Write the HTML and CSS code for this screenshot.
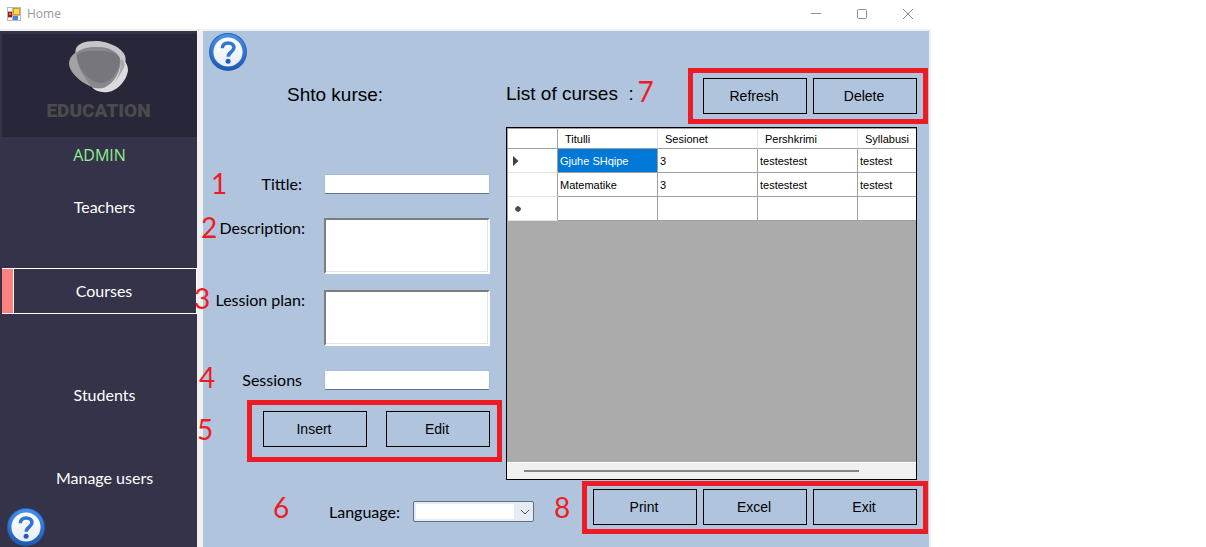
FILE: index.html
```html
<!DOCTYPE html>
<html lang="en">
<head>
<meta charset="utf-8">
<title>Home</title>
<link rel="stylesheet" href="styles.css">
</head>
<body>
<svg class="defs" aria-hidden="true">
  <defs>
    <linearGradient id="ring" x1="0" y1="0" x2="0" y2="1">
      <stop offset="0" stop-color="#4790ee"/><stop offset="1" stop-color="#1d5bb2"/>
    </linearGradient>
    <linearGradient id="disc" x1="0" y1="0" x2="0" y2="1">
      <stop offset="0" stop-color="#ffffff"/><stop offset="1" stop-color="#e6edf7"/>
    </linearGradient>
    <symbol id="help" viewBox="0 0 38 38">
      <circle cx="19" cy="19" r="19" fill="#2560b5"/>
      <circle cx="19" cy="19" r="18" fill="url(#ring)"/>
      <circle cx="19" cy="19" r="14.6" fill="url(#disc)"/>
      <path d="M13.3 15.2C13.3 11.8 15.7 9.9 19 9.9C22.5 9.9 25 11.7 25 14.6C25 18.7 19.2 19 19.2 23.8" fill="none" stroke="#3174d3" stroke-width="3.5"/>
      <circle cx="19.1" cy="28.2" r="2.5" fill="#1f5eb8"/>
    </symbol>
  </defs>
</svg>
<div class="window">
  <header class="titlebar">
    <svg class="app-icon" viewBox="0 0 14 14" aria-hidden="true">
      <rect width="14" height="14" fill="#b9b9b9"/>
      <rect x="1" y="1" width="4" height="3" fill="#fff"/>
      <rect x="1" y="11" width="4" height="2" fill="#fff"/>
      <rect x="6" y="9" width="7" height="4" fill="#fff"/>
      <rect x="1" y="5" width="4" height="5" fill="#a51212"/>
      <rect x="2" y="6" width="2" height="2" fill="#e8685c"/>
      <rect x="6" y="1" width="7" height="7" fill="#d79a12"/>
      <rect x="7" y="2" width="5" height="5" fill="#ffd84f"/>
      <rect x="6" y="9" width="5" height="4" fill="#4a86e0"/>
    </svg>
    <span class="caption">Home</span>
    <div class="window-buttons">
      <button type="button" aria-label="Minimize"><svg viewBox="0 0 12 12"><path d="M1 5.5H11"/></svg></button>
      <button type="button" aria-label="Maximize"><svg viewBox="0 0 12 12"><rect x="1.5" y="1.5" width="9" height="9" rx="1"/></svg></button>
      <button type="button" aria-label="Close"><svg viewBox="0 0 12 12"><path d="M1 1L11 11M11 1L1 11"/></svg></button>
    </div>
  </header>

  <div class="body">
    <aside class="sidebar">
      <div class="logo">
        <svg class="logo-mark" viewBox="204 120 182 158" aria-hidden="true">
          <path d="M283 263C262 240 226 190 226 155C226 132 252 123 286 123C322 123 376 145 376 178C376 212 335 262 300 266Z" fill="#c6c6c8"/>
          <path d="M359 178C376 180 383 195 383 210C380 240 350 277 312 276C295 276 283 270 276 262Z" fill="#dcdcde"/>
          <path d="M366 178C372 184 372 190 373 196C366 215 350 240 330 262C350 240 366 210 359 178Z" fill="#a8a8aa"/>
          <path d="M207 190C207 166 232 150 262 143C300 137 360 153 360 186C360 222 330 263 298 264C262 264 207 222 207 190Z" fill="#a2a2a5"/>
          <path d="M228 159C245 143 275 140 300 141C335 144 360 160 360 186C360 222 330 263 298 264C288 264 281 263 275 260C250 232 229 195 228 159Z" fill="#89898d"/>
          <path d="M231 165C245 150 280 151 310 153C335 155 352 161 358 173C362 200 338 248 304 248C266 248 232 205 231 165Z" fill="#77767d"/>
        </svg>
        <span class="logo-text">EDUCATION</span>
      </div>
      <p class="role">ADMIN</p>
      <nav class="nav">
        <div class="nav-group">
          <button type="button" class="nav-item">Teachers</button>
          <button type="button" class="nav-item active">Courses</button>
        </div>
        <div class="nav-group">
          <button type="button" class="nav-item">Students</button>
          <button type="button" class="nav-item">Manage users</button>
        </div>
      </nav>
      <button type="button" class="help" aria-label="Help"><svg><use href="#help"/></svg></button>
    </aside>

    <main class="main">
      <div class="columns">
        <form class="form">
          <button type="button" class="help" aria-label="Help"><svg><use href="#help"/></svg></button>
          <h1 class="heading form-heading">Shto kurse:</h1>
          <div class="field short"><label for="tittle">Tittle:</label><input id="tittle" type="text"><span class="mark mark-1">1</span></div>
          <div class="field"><label for="description">Description:</label><textarea id="description"></textarea><span class="mark mark-2">2</span></div>
          <div class="field last-area"><label for="plan">Lession plan:</label><textarea id="plan"></textarea><span class="mark mark-3">3</span></div>
          <div class="field short"><label for="sessions">Sessions</label><input id="sessions" type="text"><span class="mark mark-4">4</span></div>
          <div class="actions form-actions">
            <button type="button" class="btn">Insert</button>
            <button type="button" class="btn">Edit</button>
            <span class="mark mark-5">5</span>
          </div>
        </form>

        <section class="list">
          <div class="list-head">
            <h2 class="heading list-heading">List of curses&nbsp; :<span class="mark mark-7">7</span></h2>
            <div class="actions list-actions">
              <button type="button" class="btn">Refresh</button>
              <button type="button" class="btn">Delete</button>
            </div>
          </div>
          <div class="grid-view">
            <table>
              <colgroup><col class="col-head"><col class="col"><col class="col"><col class="col"><col></colgroup>
              <thead>
                <tr><th></th><th scope="col">Titulli</th><th scope="col">Sesionet</th><th scope="col">Pershkrimi</th><th scope="col">Syllabusi</th></tr>
              </thead>
              <tbody>
                <tr><th class="row-head"><svg viewBox="0 0 6 10"><path d="M0 0L5.5 5L0 10Z"/></svg></th><td class="selected">Gjuhe SHqipe</td><td>3</td><td>testestest</td><td>testest</td></tr>
                <tr><th class="row-head"></th><td>Matematike</td><td>3</td><td>testestest</td><td>testest</td></tr>
                <tr><th class="row-head new"><svg viewBox="0 0 6 6"><circle cx="3" cy="3" r="2.3"/><path d="M3 0V6M0 3H6M1 1L5 5M5 1L1 5"/></svg></th><td></td><td></td><td></td><td></td></tr>
              </tbody>
            </table>
            <div class="scrollbar"><div class="thumb"></div></div>
          </div>
        </section>
      </div>

      <footer class="bottom">
        <div class="language">
          <label for="language">Language:</label>
          <div class="combo">
            <select id="language"><option></option></select>
            <svg viewBox="0 0 10 6" aria-hidden="true"><path d="M1 1L5 5L9 1"/></svg>
          </div>
          <span class="mark mark-6">6</span>
        </div>
        <div class="actions bottom-actions">
          <button type="button" class="btn">Print</button>
          <button type="button" class="btn">Excel</button>
          <button type="button" class="btn">Exit</button>
          <span class="mark mark-8">8</span>
        </div>
      </footer>
    </main>
  </div>
</div>
</body>
</html>
```
FILE: styles.css
```css
* { box-sizing: border-box; }

body {
  margin: 0;
  background: #fff;
  color: #000;
  font-family: "Liberation Sans", Arial, sans-serif;
}

button { font: inherit; color: inherit; background: none; border: 0; padding: 0; }
.defs { position: absolute; width: 0; height: 0; }

.window {
  display: flex;
  flex-direction: column;
  max-width: 931px;
  min-height: 100vh;
  background: #f0f0f0;
}

/* Title bar */
.titlebar {
  display: flex;
  align-items: center;
  height: 29px;
  margin-bottom: 2px;
  padding: 0 17px 2px 7px;
  background: #fff;
}
.app-icon { width: 14px; height: 14px; margin-right: 6px; }
.caption { font: 12px/16px "Open Sans", sans-serif; color: #999; }
.window-buttons { display: flex; gap: 34px; margin-left: auto; }
.window-buttons button { display: flex; }
.window-buttons svg { width: 12px; height: 12px; fill: none; stroke: #8c8c8c; }

.body { flex: 1; display: flex; gap: 6px; padding-right: 2px; }

/* Sidebar */
.sidebar {
  flex: 0 0 197px;
  display: flex;
  flex-direction: column;
  padding: 3px 0 1px 2px;
  background: #34334a;
  color: #fff;
}
.logo {
  display: flex;
  flex-direction: column;
  align-items: center;
  height: 103px;
  padding: 6px 2px 0 0;
  background: #272739;
}
.logo-mark { width: 61px; height: 53px; }
.logo-text {
  margin-top: 6px;
  font: 900 19px/24px Roboto, sans-serif;
  color: #4b4b4c;
}
.role {
  margin: 0 0 12px;
  font: 16px/36px "Open Sans", sans-serif;
  text-align: center;
  color: #90ee90;
}
.nav { display: flex; flex-direction: column; gap: 59px; }
.nav-group { display: flex; flex-direction: column; gap: 37px; }
.nav-item {
  height: 46px;
  padding: 0 0 2px 10px;
  font: 16px/20px Lato, sans-serif;
}
.nav-item.active {
  padding: 0;
  border: 1px solid #fff;
  border-left: 0;
  box-shadow: inset 11px 0 #ff8080, inset 12px 0 #fff;
  padding-left: 10px;
}
.help { display: block; width: 38px; height: 38px; }
.help svg { display: block; width: 38px; height: 38px; }
.sidebar .help { margin: auto 0 0 5px; }

/* Main panel */
.main {
  flex: 1;
  min-width: 0;
  display: flex;
  flex-direction: column;
  gap: 9px;
  padding: 2px 12px 22px 0;
  background: #b0c4de;
}
.columns { flex: 1; display: flex; gap: 16px; }
.heading { margin: 0; font-size: 19px; line-height: 24px; font-weight: normal; }

.form { flex: 0 0 287px; }
.form .help { margin-left: 6px; }
.form-heading { margin: 12px 0 67px; padding-left: 84px; }
.field {
  position: relative;
  display: flex;
  justify-content: space-between;
  margin-bottom: 16px;
}
.field.short, .field.last-area { margin-bottom: 24px; }
.field label, .language label { font: 16px/20px Lato, sans-serif; }
.field label { width: 102px; text-align: right; white-space: nowrap; }
.field.short label { width: 99px; }
.field input {
  width: 166px;
  height: 20px;
  padding: 0 4px;
  border: 1px solid #a9bbd8;
  border-bottom-color: #64758c;
  border-radius: 2px;
  background: #fff;
}
.field textarea {
  width: 166px;
  height: 56px;
  border: 2px solid;
  border-color: #7d7d7d #fff #fff #7d7d7d;
  background: #fff;
  box-shadow: inset -1px -1px #e3e3e3;
  resize: none;
}

.actions { position: relative; display: flex; gap: 6px; }
.actions::before {
  content: "";
  position: absolute;
  border: 5px solid #ed1c24;
  pointer-events: none;
}
.btn { width: 104px; height: 36px; padding-right: 2px; border: 1px solid #000; font-size: 14px; }
.form-actions { justify-content: space-between; margin: -3px 0 0 60px; }
.form-actions::before { inset: -11px -12px -15px -16px; }
.list-actions::before { inset: -10px -11px -10px -15px; }
.bottom-actions::before { inset: -8px -11px -9px -11px; }

/* Callout numbers */
.mark {
  position: absolute;
  font: 28px/28px Lato, sans-serif;
  color: #ed1c24;
}
.mark-1 { left: 8px; top: -5px; }
.mark-2 { left: -2px; top: -5px; }
.mark-3 { left: -9px; top: -6px; }
.mark-4 { left: -4px; top: -7px; }
.mark-5 { left: -66px; top: 4px; }
.mark-6 { left: 70px; top: 4px; }
.mark-7 { right: -20px; top: -5px; }
.mark-8 { left: -39px; top: 4px; }

/* Course list */
.list { flex: 1; min-width: 0; display: flex; flex-direction: column; padding-top: 45px; }
.list-head { display: flex; justify-content: space-between; margin-bottom: 13px; }
.list-heading { position: relative; margin-top: 4px; white-space: pre; }
.grid-view {
  flex: 1;
  display: flex;
  flex-direction: column;
  justify-content: space-between;
  border: 1px solid #000;
  background: #ababab;
}
table {
  width: 100%;
  table-layout: fixed;
  border-collapse: separate;
  border-spacing: 0;
  border-top: 1px solid #a0a0a0;
  border-left: 1px solid #a0a0a0;
  background: #fff;
  font-size: 11px;
}
.col-head { width: 50px; }
.col { width: 100px; }
th, td {
  height: 24px;
  padding: 0 2px;
  border: solid #a0a0a0;
  border-width: 0 1px 1px 0;
  font-weight: normal;
  text-align: left;
  white-space: nowrap;
  overflow: hidden;
}
th:last-child, td:last-child { border-right: 0; }
thead th { height: 20px; padding: 0 0 0 7px; border-right-color: #e3e3e3; }
thead th:first-child { border-right-color: #a0a0a0; }
.row-head { padding-left: 5px; border-bottom-color: #e3e3e3; }
.row-head svg { display: block; width: 6px; height: 10px; fill: #404040; }
.row-head.new { padding-left: 7px; }
.row-head.new svg { height: 6px; stroke: #505050; stroke-width: 1; }
.selected { background: #0078d7; color: #fff; }
.scrollbar { height: 17px; padding: 7px 57px 0 17px; border-top: 1px solid #fff; background: #f0f0f0; }
.thumb { height: 2px; background: #858585; }

/* Bottom row */
.bottom { display: flex; justify-content: space-between; }
.language { position: relative; display: flex; align-items: flex-end; gap: 13px; padding: 0 0 3px 126px; }
.combo { position: relative; display: flex; }
.combo select {
  appearance: none;
  width: 121px;
  height: 21px;
  border: 1px solid #626f82;
  border-radius: 2px;
  background: linear-gradient(#fff, #fff) 2px 2px / 98px 15px no-repeat #e5ecf6;
}
.combo svg {
  position: absolute;
  right: 4px;
  top: 8px;
  width: 10px;
  height: 6px;
  fill: none;
  stroke: #555;
  pointer-events: none;
}
```
